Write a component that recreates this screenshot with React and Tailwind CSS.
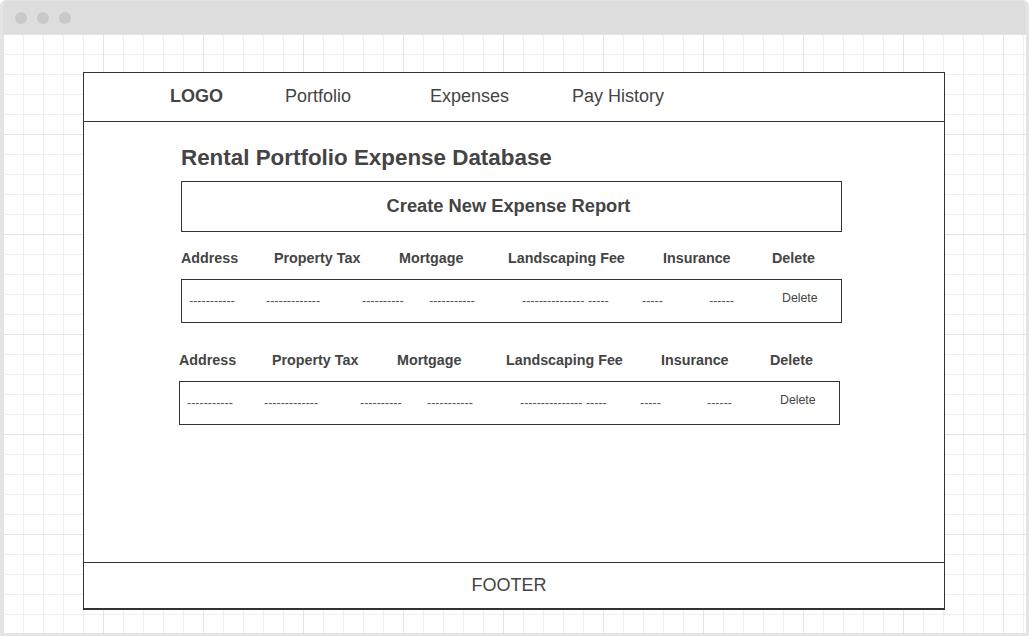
const NAV = [
  { label: 'LOGO', w: 'w-[115px]', bold: true },
  { label: 'Portfolio', w: 'w-[145px]' },
  { label: 'Expenses', w: 'w-[142px]' },
  { label: 'Pay History', w: '' },
]

const HEADERS = ['Address', 'Property Tax', 'Mortgage', 'Landscaping Fee', 'Insurance', 'Delete']
const CELLS = ['-----------', '-------------', '----------', '-----------', '--------------- -----', '-----', '------']

function ExpenseBlock({ shift }) {
  return (
    <div className={shift}>
      <div className="grid grid-cols-[93px_125px_109px_155px_109px_auto] text-[14.3px] leading-[20px] font-bold text-[#444]">
        {HEADERS.map(h => <span key={h}>{h}</span>)}
      </div>
      <div className="mt-[11px] w-[661px] h-[44px] border border-[#333] grid grid-cols-[77px_96px_67px_93px_120px_67px_73px_auto] items-center pl-[7px] text-[12.5px] text-[#555]">
        {CELLS.map((c, i) => <span key={i} className="pt-[1px]">{c}</span>)}
        <span className="text-[12.3px] text-[#444] pb-[6px]">Delete</span>
      </div>
    </div>
  )
}

export default function App() {
  return (
    <div className="w-[1029px] h-[636px] bg-white border-[3px] border-t-[1px] border-[#e4e4e4] rounded-t-[6px] overflow-hidden flex flex-col font-['Liberation_Sans',Arial,sans-serif] text-[#444]">
      <div className="h-[33px] shrink-0 bg-[#dddddd] flex items-center pl-[12px] gap-[10px]">
        <span className="w-[12px] h-[12px] rounded-full bg-[#c9c9c9]" />
        <span className="w-[12px] h-[12px] rounded-full bg-[#c9c9c9]" />
        <span className="w-[12px] h-[12px] rounded-full bg-[#c9c9c9]" />
      </div>

      <div className="flex-1 pt-[38px] pl-[80px] bg-[linear-gradient(to_right,#e3e3e3_1px,transparent_1px),linear-gradient(to_bottom,#e3e3e3_1px,transparent_1px),linear-gradient(to_right,#efefef_1px,transparent_1px),linear-gradient(to_bottom,#efefef_1px,transparent_1px)] bg-[size:100px_100px,100px_100px,20px_20px,20px_20px]">
        <div className="w-[862px] h-[538px] bg-white border border-b-2 border-[#333] flex flex-col">
          <nav className="h-[49px] shrink-0 border-b border-[#333] flex items-center pl-[86px] pb-[2px] text-[18px]">
            {NAV.map(n => (
              <span key={n.label} className={`${n.w} ${n.bold ? 'font-bold' : ''}`}>{n.label}</span>
            ))}
          </nav>

          <main className="flex-1 pl-[97px] pt-[22px]">
            <h1 className="text-[22.4px] leading-[28px] font-bold text-[#444]">Rental Portfolio Expense Database</h1>
            <div className="mt-[9px] w-[661px] h-[51px] border border-[#333] flex items-center justify-center pr-[6px] pb-[2px] text-[18.3px] font-bold">
              Create New Expense Report
            </div>
            <div className="mt-[16px]">
              <ExpenseBlock shift="" />
            </div>
            <div className="mt-[27px]">
              <ExpenseBlock shift="-ml-[2px]" />
            </div>
          </main>

          <footer className="h-[46px] shrink-0 border-t border-[#333] flex items-center justify-center pr-[10px] text-[18px]">
            FOOTER
          </footer>
        </div>
      </div>
    </div>
  )
}
